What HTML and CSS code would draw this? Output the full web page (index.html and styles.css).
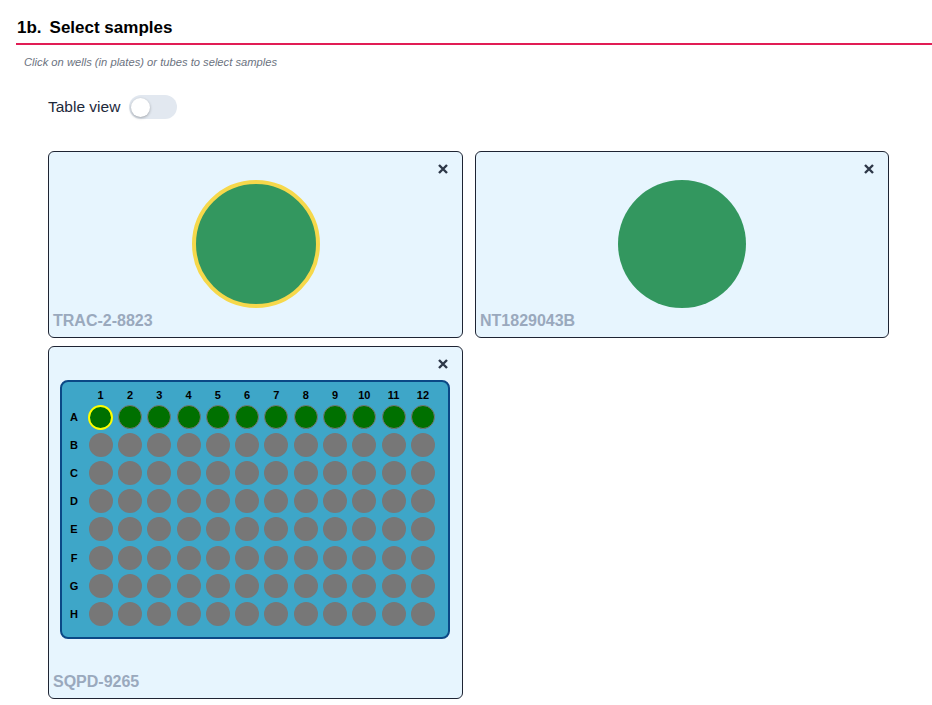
FILE: index.html
```html
<!DOCTYPE html>
<html>
<head>
<meta charset="utf-8">
<link rel="stylesheet" href="styles.css">
</head>
<body>
<div class="page">
  <h2 class="section-title"><span class="num">1b.</span>Select samples</h2>
  <p class="hint">Click on wells (in plates) or tubes to select samples</p>
  <div class="toggle-row">
    <span class="toggle-label">Table view</span>
    <span class="toggle"><span class="knob"></span></span>
  </div>
  <div class="cards">
    <div class="card">
      <svg class="close" viewBox="0 0 10 10"><path d="M1 1L9 9M9 1L1 9"/></svg>
      <div class="tube selected"></div>
      <div class="card-label">TRAC-2-8823</div>
    </div>
    <div class="card">
      <svg class="close" viewBox="0 0 10 10"><path d="M1 1L9 9M9 1L1 9"/></svg>
      <div class="tube"></div>
      <div class="card-label">NT1829043B</div>
    </div>
    <div class="card card-plate">
      <svg class="close" viewBox="0 0 10 10"><path d="M1 1L9 9M9 1L1 9"/></svg>
      <div class="plate" id="plate"></div>
      <div class="card-label">SQPD-9265</div>
    </div>
  </div>
</div>
<script>
  var plate = document.getElementById('plate');
  var rows = ['A','B','C','D','E','F','G','H'];
  var html = '<div class="hdr"></div>';
  for (var c = 1; c <= 12; c++) html += '<div class="hdr">' + c + '</div>';
  rows.forEach(function (r) {
    html += '<div class="rl">' + r + '</div>';
    for (var c = 1; c <= 12; c++) {
      var cls = 'well';
      if (r === 'A') cls += ' filled';
      if (r === 'A' && c === 1) cls += ' sel';
      html += '<div class="cell"><span class="' + cls + '"></span></div>';
    }
  });
  plate.innerHTML = html;
</script>
</body>
</html>
```
FILE: styles.css
```css
* { box-sizing: border-box; }
html, body { margin: 0; padding: 0; background: #fff; }
body { font-family: "Liberation Sans", Arial, sans-serif; color: #111; }
.page { padding: 17px 0 0 16px; }
.section-title {
  margin: 0;
  font-size: 17px;
  line-height: 22px;
  font-weight: bold;
  color: #000;
  padding: 0 0 4px 1px;
  border-bottom: 2px solid #e11d55;
}
.section-title .num { margin-right: 8px; }
.hint {
  margin: 10px 0 0 8px;
  font-size: 11.2px;
  line-height: 14px;
  font-style: italic;
  color: #6b7280;
}
.toggle-row {
  margin: 26px 0 0 32px;
  display: flex;
  align-items: center;
  gap: 9px;
  height: 24px;
}
.toggle-label { font-size: 15.5px; color: #1e293b; }
.toggle {
  width: 48px;
  height: 24px;
  border-radius: 12px;
  background: #e2e8f0;
  display: flex;
  align-items: center;
  padding-left: 2px;
}
.knob {
  width: 19px;
  height: 19px;
  border-radius: 50%;
  background: #fff;
  box-shadow: 0 1px 3px rgba(0,0,0,0.3);
}
.cards {
  margin: 32px 0 0 32px;
  display: grid;
  grid-template-columns: 415px 414px;
  column-gap: 12px;
  row-gap: 8px;
  align-items: start;
}
.card {
  position: relative;
  background: #e7f5fe;
  border: 1px solid #1e2433;
  border-radius: 6px;
  padding: 28px 4px 7px 4px;
  display: flex;
  flex-direction: column;
}
.close {
  position: absolute;
  top: 12px;
  right: 14px;
  width: 10px;
  height: 10px;
  stroke: #2d3748;
  stroke-width: 2.4;
  fill: none;
}
.tube {
  width: 128px;
  height: 128px;
  border-radius: 50%;
  background: #33975f;
  align-self: center;
}
.tube.selected { border: 4px solid #f6d84b; }
.card-label {
  margin-top: 4px;
  font-size: 16px;
  line-height: 18px;
  font-weight: bold;
  color: #9aa9bd;
}
.card-plate { padding-top: 33px; padding-bottom: 7px; }
.card-plate .card-label { margin-top: 34px; }
.plate {
  margin-left: 7px;
  width: 390px;
  height: 259px;
  background: #3ea6c8;
  border: 2px solid #0b4885;
  border-radius: 8px;
  padding-top: 5px;
  display: grid;
  grid-template-columns: 24px repeat(12, 29.3px);
  grid-template-rows: 16px repeat(8, 28.1px);
}
.hdr, .rl {
  font-size: 11px;
  font-weight: bold;
  color: #000;
  display: flex;
  align-items: center;
  justify-content: center;
}
.cell { display: flex; align-items: center; justify-content: center; }
.well {
  width: 24px;
  height: 24px;
  border-radius: 50%;
  background: #777777;
}
.well.filled { background: #007000; border: 1px solid #777; }
.well.sel { width: 25px; height: 25px; border: 2px solid #ffff00; }
```
